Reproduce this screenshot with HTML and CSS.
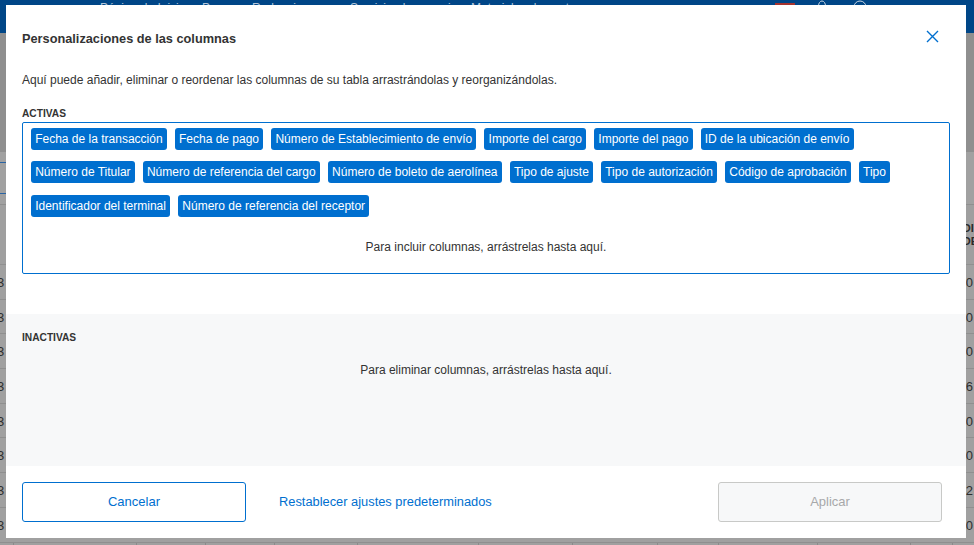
FILE: index.html
```html
<!DOCTYPE html>
<html lang="es">
<head>
<meta charset="utf-8">
<title>Personalizaciones de las columnas</title>
<link rel="stylesheet" href="styles.css">
</head>
<body>
<div class="page">
  <header class="topbar">
    <nav class="nav">
      <span class="nav-a">Página de Inicio</span>
      <span class="nav-b">Pagos</span>
      <span class="nav-c">Redenciones</span>
      <span class="nav-d">Servicio al comercio</span>
      <span class="nav-e">Materiales de venta</span>
    </nav>
    <div class="nav-icons">
      <span class="flag"></span>
      <svg class="nav-icon" width="14" height="14" viewBox="0 0 14 14"><ellipse cx="7" cy="6" rx="3.5" ry="5" fill="none" stroke="#c9d6e4" stroke-width="1"/></svg>
      <svg class="nav-icon" width="14" height="14" viewBox="0 0 14 14"><circle cx="7" cy="7" r="6" fill="none" stroke="#c9d6e4" stroke-width="1"/></svg>
    </div>
  </header>
  <div class="filters"></div>
  <div class="tabs"><span class="tab"></span></div>
  <div class="thead"><span class="th">DI<br>DE</span></div>
  <div class="row"><span class="l">3</span><span class="r">00</span></div>
  <div class="row"><span class="l">3</span><span class="r">00</span></div>
  <div class="row"><span class="l">3</span><span class="r">00</span></div>
  <div class="row"><span class="l">3</span><span class="r">46</span></div>
  <div class="row"><span class="l">3</span><span class="r">20</span></div>
  <div class="row"><span class="l">3</span><span class="r">20</span></div>
  <div class="row"><span class="l">3</span><span class="r">&nbsp;2</span></div>
  <div class="row"><span class="l">3</span><span class="r">00</span></div>
  <div class="row-last">
    <span></span><span></span><span></span><span></span><span></span><span></span>
    <span></span><span></span><span></span><span></span><span></span><span></span>
  </div>
</div>

<div class="modal">
  <div class="modal-head">
    <h1 class="title">Personalizaciones de las columnas</h1>
    <button class="close" aria-label="Cerrar">
      <svg width="13" height="13" viewBox="0 0 13 13"><path d="M1 1 L12 12 M12 1 L1 12" fill="none" stroke="#006fcf" stroke-width="1.4"/></svg>
    </button>
  </div>
  <p class="desc">Aquí puede añadir, eliminar o reordenar las columnas de su tabla arrastrándolas y reorganizándolas.</p>
  <h2 class="label label-active">ACTIVAS</h2>
  <div class="active-box">
    <div class="chips">
      <span class="chip">Fecha de la transacción</span>
      <span class="chip">Fecha de pago</span>
      <span class="chip">Número de Establecimiento de envío</span>
      <span class="chip">Importe del cargo</span>
      <span class="chip">Importe del pago</span>
      <span class="chip">ID de la ubicación de envío</span>
      <span class="chip">Número de Titular</span>
      <span class="chip">Número de referencia del cargo</span>
      <span class="chip">Número de boleto de aerolínea</span>
      <span class="chip">Tipo de ajuste</span>
      <span class="chip">Tipo de autorización</span>
      <span class="chip">Código de aprobación</span>
      <span class="chip">Tipo</span>
      <span class="chip">Identificador del terminal</span>
      <span class="chip">Número de referencia del receptor</span>
    </div>
    <p class="hint hint-active">Para incluir columnas, arrástrelas hasta aquí.</p>
  </div>
  <section class="inactive">
    <h2 class="label">INACTIVAS</h2>
    <p class="hint hint-inactive">Para eliminar columnas, arrástrelas hasta aquí.</p>
  </section>
  <footer class="modal-foot">
    <button class="btn btn-cancel">Cancelar</button>
    <a class="reset">Restablecer ajustes predeterminados</a>
    <button class="btn btn-apply" disabled>Aplicar</button>
  </footer>
</div>
</body>
</html>
```
FILE: styles.css
```css
* { box-sizing: border-box; }
html, body {
  margin: 0;
  height: 545px;
  overflow: hidden;
}
body {
  font-family: "Liberation Sans", Arial, sans-serif;
  font-size: 12px;
  color: #333;
  background: #9f9f9f;
}

/* dimmed page behind the dialog */
.page { height: 545px; overflow: hidden; }
.topbar {
  height: 33px;
  background: #004687;
  display: flex;
  justify-content: space-between;
  color: #b4c6da;
}
.nav { display: flex; margin-top: 2px; margin-left: 100px; line-height: 12px; height: 12px; }
.nav-a { width: 102px; }
.nav-b { width: 50px; }
.nav-c { width: 98px; }
.nav-d { width: 121px; }
.nav-e { width: 120px; }
.nav-icons { display: flex; align-items: flex-start; margin-right: 107px; }
.flag { width: 20px; height: 2px; margin-top: 3px; background: #a5332f; margin-right: 20px; }
.nav-icon { margin-right: 24px; }
.nav-icon:last-child { margin-right: 0; }
.filters { height: 119px; background: #8f8f8f; }
.tabs { height: 53px; background: #a1a1a1; padding-top: 10px; border-bottom: 1px solid #8f8f8f; }
.tab {
  display: block;
  width: 30px;
  height: 32px;
  border-top: 1px solid #2b64a3;
  border-bottom: 1px solid #2b64a3;
}
.thead {
  height: 60px;
  background: #9f9f9f;
  border-bottom: 1px solid #909090;
  display: flex;
  justify-content: flex-end;
  align-items: center;
}
.th { font-size: 11px; font-weight: bold; line-height: 13px; color: #2a2a2a; margin-right: -4px; }
.row {
  height: 34.7px;
  padding-top: 1px;
  border-bottom: 1px solid #8f8f8f;
  background: #a0a0a0;
  display: flex;
  justify-content: space-between;
  align-items: center;
  color: #2f2f2f;
  font-size: 13px;
}
.l { margin-left: -3px; }
.r { margin-right: 1px; }
.row-last {
  height: 34.7px;
  display: grid;
  grid-template-columns: 14px 123px 69px 69px 83px 121px 94px 85px 61px 99px 93px 42px;
  border-bottom: 1px solid #8f8f8f;
  background: #a0a0a0;
}
.row-last span { border-right: 1px solid #8a8a8a; }

/* dialog */
.modal {
  position: fixed;
  left: 6px;
  top: 5px;
  width: 960px;
  height: 533px;
  background: #fff;
  display: flex;
  flex-direction: column;
}
.modal-head {
  display: flex;
  justify-content: space-between;
  align-items: flex-start;
  padding: 25px 27px 0 16px;
}
.title {
  margin: 0;
  font-size: 12.75px;
  line-height: 18px;
  font-weight: bold;
  color: #333;
}
.close {
  border: 0;
  background: none;
  padding: 0;
  height: 13px;
  display: block;
}
.close svg { display: block; }
.desc {
  margin: 23px 16px 0;
  line-height: 18px;
  color: #333;
}
.label {
  margin: 0;
  font-size: 10.2px;
  line-height: 12px;
  font-weight: bold;
  color: #333;
}
.label-active { margin: 19px 16px 0; }
.active-box {
  margin: 2px 16px 0;
  height: 152px;
  border: 1px solid #006fcf;
  border-radius: 2px;
  padding: 5px 8px 0;
}
.chips {
  display: flex;
  flex-wrap: wrap;
  column-gap: 8px;
  row-gap: 11.4px;
}
.chip {
  height: 22px;
  line-height: 22px;
  padding: 0 4.2px;
  border-radius: 3px;
  background: #006fcf;
  color: #fff;
  white-space: nowrap;
}
.hint { margin: 0; line-height: 18px; text-align: center; color: #333; }
.hint-active { margin-top: 21px; }
.hint-inactive { margin-top: 17px; }
.inactive {
  margin-top: 40px;
  height: 152px;
  background: #f7f8f9;
  padding: 18px 16px 0;
}
.modal-foot {
  flex: 1;
  display: flex;
  align-items: flex-start;
  padding: 16px 24px 0 16px;
}
.btn {
  width: 224px;
  height: 40px;
  border-radius: 3px;
  font: inherit;
  font-size: 13px;
  padding: 0 0 2px;
}
.btn-cancel { background: #fff; border: 1px solid #006fcf; color: #006fcf; }
.btn-apply {
  margin-left: auto;
  background: #f7f8f9;
  border: 1px solid #c8c9c7;
  color: #a7a8aa;
}
.reset {
  margin-left: 33px;
  font-size: 12.85px;
  line-height: 40px;
  color: #006fcf;
}
```
